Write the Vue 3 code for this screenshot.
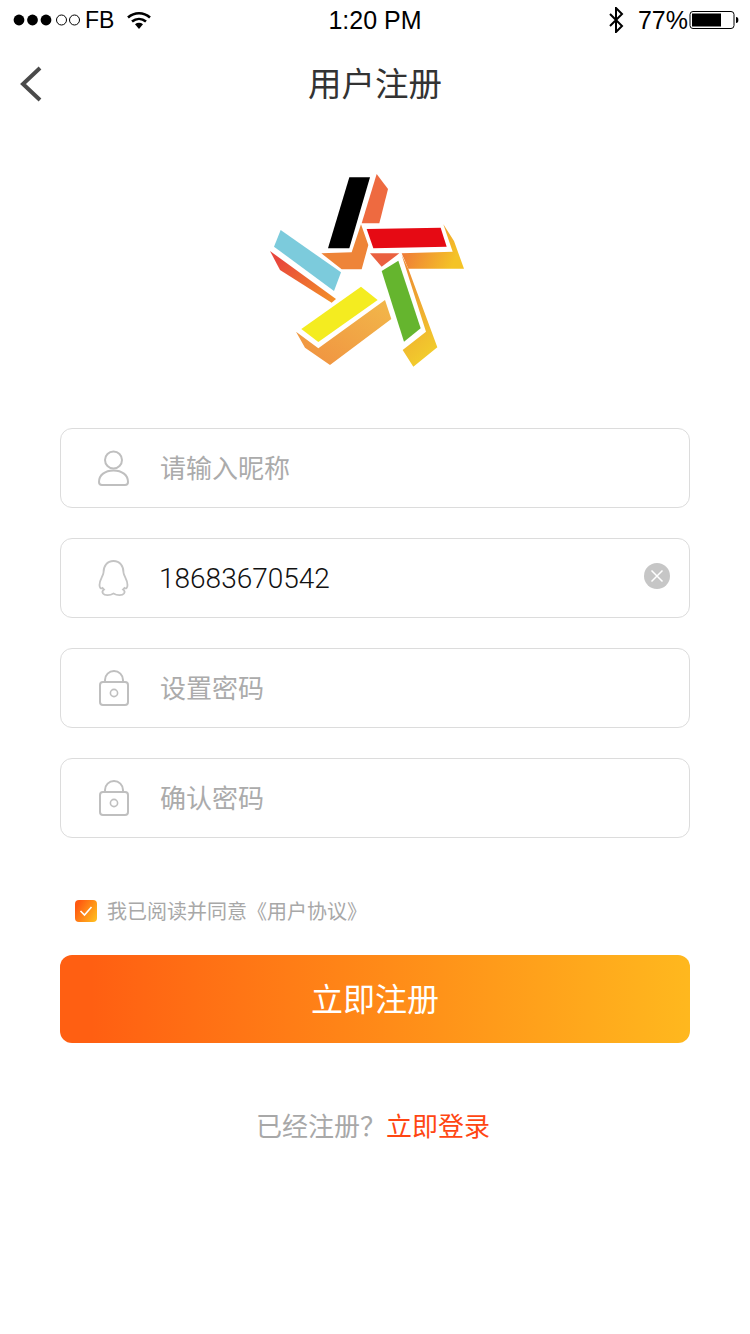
<template>
  <div class="page">
    <div class="status-bar">
      <div class="sb-left">
        <svg class="signal" width="68" height="12" viewBox="0 0 68 12">
          <circle v-for="i in 3" :key="i" :cx="6 + (i - 1) * 13.500" cy="6" r="5.400" fill="#000" />
          <circle v-for="i in 2" :key="'e' + i" :cx="48.500 + (i - 1) * 13" cy="6" r="5" fill="none" stroke="#000" stroke-width="1" />
        </svg>
        <span class="carrier">FB</span>
        <svg class="wifi" width="24" height="18" viewBox="0 0 24 18">
          <path d="M1 6.500C7.500.8 16.500.8 23 6.500" fill="none" stroke="#000" stroke-width="2.600" />
          <path d="M5 10.600c4.200-3.500 9.800-3.500 14 0" fill="none" stroke="#000" stroke-width="2.600" />
          <path d="M8 13.200c2.400-1.800 5.600-1.800 8 0L12 18z" fill="#000" />
        </svg>
      </div>
      <div class="sb-time">1:20 PM</div>
      <div class="sb-right">
        <svg class="bt" width="16" height="26" viewBox="0 0 16 26">
          <path d="M2 7l12 12-6 6V1l6 6L2 19" fill="none" stroke="#000" stroke-width="2" />
        </svg>
        <span class="percent">77%</span>
        <svg class="battery" width="50" height="20" viewBox="0 0 50 20">
          <rect x="1" y="1.500" width="44" height="17" rx="3" fill="none" stroke="#000" stroke-width="1" />
          <rect x="3" y="3.500" width="29" height="13" fill="#000" />
          <path d="M47 7c1.600 0 2.400 1 2.400 3s-.8 3-2.400 3z" fill="#000" />
        </svg>
      </div>
    </div>

    <div class="nav">
      <svg class="back" width="24" height="38" viewBox="0 0 24 38">
        <path d="M21 3L4 19l17 16" fill="none" stroke="#4a4a4a" stroke-width="4" />
      </svg>
      <h1>用户注册</h1>
    </div>

    <div class="logo">
      <svg width="215" height="210" viewBox="0 0 645 630">
        <defs>
          <linearGradient id="lg1" x1="0" y1="0" x2="1" y2="0.3">
            <stop offset="0" stop-color="#ee6a3c" />
            <stop offset="1" stop-color="#f4c326" />
          </linearGradient>
          <linearGradient id="lg2" x1="0" y1="1" x2="1" y2="0">
            <stop offset="0" stop-color="#f09040" />
            <stop offset="1" stop-color="#f2b84a" />
          </linearGradient>
          <linearGradient id="lg3" x1="0.3" y1="0" x2="0.6" y2="1">
            <stop offset="0" stop-color="#ec8a34" />
            <stop offset="1" stop-color="#f2cf2c" />
          </linearGradient>
          <linearGradient id="lg4" x1="0" y1="0" x2="1" y2="1">
            <stop offset="0.15" stop-color="#e8463c" />
            <stop offset="1" stop-color="#f39226" />
          </linearGradient>
        </defs>
        <polygon points="350,27 384,72 358,175 305,175" fill="#ee6a40" />
        <polygon points="184,265 275,262 303,178 325,240 305,313 245,313" fill="#ee8438" />
        <polygon points="550,178 582,228 612,311 445,311 425,265 578,260" fill="url(#lg1)" />
        <polygon points="330,265 418,265 365,305" fill="#ea6040" />
        <polygon points="425,270 445,311 532,547 460,605 428,555 498,500" fill="url(#lg3)" />
        <polygon points="30,258 228,402 215,413 60,315" fill="url(#lg4)" />
        <polygon points="108,500 175,550 375,405 394,462 210,600 135,548" fill="url(#lg2)" />
        <polygon points="268,37 330,37 268,250 204,250" fill="#000" />
        <polygon points="320,192 542,188 560,245 340,250" fill="#e60a14" />
        <polygon points="365,318 415,287 482,490 432,530" fill="#65b52e" />
        <polygon points="62,195 243,322 222,378 42,245" fill="#7ccbdc" />
        <polygon points="303,365 353,405 175,531 124,492" fill="#f4ec20" />
      </svg>
    </div>

    <form class="form" @submit.prevent>
      <label v-for="f in fields" :key="f.key" class="field">
        <svg class="field-icon" width="32" height="38" viewBox="0 0 32 38">
          <g v-if="f.icon === 'user'" fill="none" stroke="#bfbfbf" stroke-width="2">
            <circle cx="15.500" cy="11" r="8.500" />
            <path d="M1 33c0-7 6-11.500 14.500-11.500S30 26 30 33c0 2-1 3-3 3H4c-2 0-3-1-3-3z" />
          </g>
          <path
            v-else-if="f.icon === 'qq'"
            fill="none"
            stroke="#c4c4c4"
            stroke-width="1.800"
            d="M15.500 2C9 2 5.500 7 5.500 13.500C5.500 16.500 1.500 20.500 1.500 26C1.500 29 3 30 4.500 29L6 30.500C4.500 31.500 4 33 5 34.500C6.500 36.500 11.500 37 15.500 34.500C19.500 37 24.500 36.500 26 34.500C27 33 26.500 31.500 25 30.500L26.500 29C28 30 29.500 29 29.500 26C29.500 20.500 25.500 16.500 25.500 13.500C25.500 7 22 2 15.500 2Z"
          />
          <g v-else fill="none" stroke="#bfbfbf" stroke-width="2">
            <path d="M7 13V11a9 9 0 0 1 18 0v2" />
            <rect x="2" y="13" width="28" height="23" rx="3" />
            <circle cx="16" cy="24" r="3.600" stroke-width="1.600" />
          </g>
        </svg>
        <input
          v-model="f.value"
          class="field-input"
          :class="{ filled: f.value }"
          :placeholder="f.placeholder"
          type="text"
        />
        <span v-if="f.value" class="clear">
          <svg width="14" height="14" viewBox="0 0 14 14">
            <path d="M1.500 1.500l11 11M12.500 1.500l-11 11" stroke="#fff" stroke-width="1.500" />
          </svg>
        </span>
      </label>
    </form>

    <div class="agree">
      <span class="check">
        <svg width="14" height="12" viewBox="0 0 14 12">
          <path d="M1.500 6l4 4 7-8" fill="none" stroke="#fff" stroke-width="1.600" />
        </svg>
      </span>
      <span class="agree-text">我已阅读并同意《用户协议》</span>
    </div>

    <button class="submit" type="button">立即注册</button>

    <div class="login">已经注册&#xFF1F;<a>立即登录</a></div>
  </div>
</template>

<script setup>
import { reactive } from 'vue'

const fields = reactive([
  { key: 'nick', icon: 'user', placeholder: '请输入昵称', value: '' },
  { key: 'qq', icon: 'qq', placeholder: '', value: '18683670542' },
  { key: 'pwd', icon: 'lock', placeholder: '设置密码', value: '' },
  { key: 'pwd2', icon: 'lock', placeholder: '确认密码', value: '' },
])
</script>

<style>
html, body { background: #fff; }
</style>

<style scoped>
.page {
  width: 750px;
  height: 1334px;
  overflow: hidden;
  background: #fff;
  font-family: "Liberation Sans", "Noto Sans CJK SC", sans-serif;
  color: #000;
}
.status-bar {
  height: 40px;
  display: grid;
  grid-template-columns: 1fr auto 1fr;
  align-items: center;
  font-size: 24px;
}
.sb-left { display: flex; align-items: center; padding-left: 13px; }
.signal { margin-right: 4px; }
.carrier { font-size: 23px; }
.wifi { margin-left: 13px; }
.sb-time { font-size: 25px; }
.sb-right { display: flex; align-items: center; justify-content: flex-end; padding-right: 11px; }
.bt { margin-right: 14px; }
.percent { font-size: 25px; margin-right: 1px; }

.nav {
  height: 88px;
  box-sizing: border-box;
  padding-bottom: 6px;
  display: flex;
  align-items: center;
  justify-content: center;
  position: relative;
}
.nav h1 {
  margin: 0;
  font-size: 33.500px;
  font-weight: 400;
  color: #333;
}
.back { position: absolute; left: 19px; top: 25px; }

.logo {
  height: 210px;
  margin-top: 37px;
  display: flex;
  justify-content: center;
}
.logo svg { margin-left: -15px; }

.form {
  margin: 53px 60px 0;
  display: flex;
  flex-direction: column;
  gap: 30px;
}
.field {
  height: 80px;
  box-sizing: border-box;
  border: 1px solid #dcdcdc;
  border-radius: 12px;
  display: flex;
  align-items: center;
  padding: 0 19px 0 37px;
}
.field-icon { flex: none; margin-right: 30px; }
.field-input {
  flex: 1;
  min-width: 0;
  border: 0;
  outline: 0;
  padding: 2px 0 0;
  background: transparent;
  font-family: inherit;
  font-size: 26px;
  color: #111;
}
.field-input::placeholder { color: #ababab; opacity: 1; }
.field-input.filled {
  padding: 0;
  font-family: Roboto, "Liberation Sans", sans-serif;
  font-weight: 300;
  font-size: 28px;
  margin-left: -1px;
}
.clear {
  width: 26px;
  height: 26px;
  border-radius: 50%;
  background: #c6c6c6;
  display: flex;
  align-items: center;
  justify-content: center;
  margin-top: -4px;
}

.agree {
  margin: 62px 0 0 75px;
  height: 22px;
  display: flex;
  align-items: center;
  gap: 10px;
  font-size: 20px;
  color: #a8a8a8;
}
.agree-text { margin-top: -2px; }
.check {
  width: 22px;
  height: 22px;
  border-radius: 4px;
  background: linear-gradient(120deg, #ff5a10 15%, #ffb81e 90%);
  display: flex;
  align-items: center;
  justify-content: center;
}

.submit {
  display: block;
  width: 630px;
  height: 88px;
  margin: 33px 60px 0;
  border: 0;
  padding: 0 0 4px;
  border-radius: 12px;
  background: linear-gradient(90deg, #ff5f12 5%, #ffb81e 100%);
  color: #fff;
  font-family: inherit;
  font-size: 32px;
}

.login {
  margin-top: 66px;
  padding-right: 4px;
  text-align: center;
  font-size: 26px;
  line-height: 36px;
  color: #a8a8a8;
}
.login a { color: #ff4612; }
</style>
